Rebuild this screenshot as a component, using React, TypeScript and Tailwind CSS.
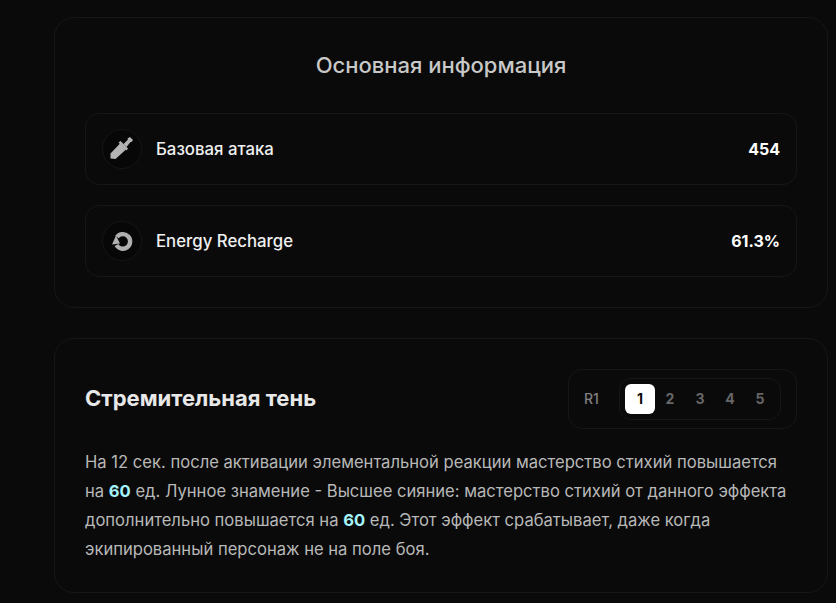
const levels = [1, 2, 3, 4, 5];

function SwordIcon() {
  return (
    <svg width="24" height="24" viewBox="0 0 24 24" className="text-[#b4b4b4]" fill="currentColor">
      <path d="M0.5 16.5 L0.5 21.5 L5.5 22 L16 12.5 L10 6.5 Z" />
      <path d="M8.5 5.5 L10.5 4 L18 11.5 L16.5 13.5 Z" />
      <path d="M13.5 7 L18 2.5 L17.5 1.5 L20 0 L23 3 L21.5 5 L20.5 5 L16.5 10 Z" />
    </svg>
  );
}

function RechargeIcon() {
  return (
    <svg width="24" height="24" viewBox="0 0 24 24" fill="none">
      <path d="M7 8 A7.3 7.3 0 1 1 6.5 16" stroke="#b0b0b0" strokeWidth="4.4" />
      <path d="M2 15.5 L6 6.5 L10 14.5 Z" fill="#b0b0b0" />
    </svg>
  );
}

function StatRow({ icon, label, value }: { icon: React.ReactNode; label: string; value: string }) {
  return (
    <div className="flex h-[72px] items-center justify-between rounded-[14px] border border-[#161616] px-4">
      <div className="flex items-center gap-3.5">
        <div className="flex h-10 w-10 items-center justify-center rounded-full border border-[#161616] bg-[#070707]">
          {icon}
        </div>
        <span className="text-[16.8px] leading-[25px] font-medium text-[#f0f0f0]">{label}</span>
      </div>
      <span className="text-base font-bold text-white">{value}</span>
    </div>
  );
}

export default function App() {
  return (
    <div
      className="flex h-[603px] flex-col gap-[30px] overflow-hidden bg-[#0a0a0a] pl-[54px] pr-2 pt-[17px]"
      style={{ fontFamily: '"Inter", "Liberation Sans", sans-serif' }}
    >
      {/* Main info */}
      <section className="flex flex-col rounded-[20px] border border-[#161616] px-[30px] pb-[30px] pt-[30px]">
        <h2 className="mb-[30px] text-center text-[22px] leading-[35px] font-medium text-[#c8c8c8]">
          Основная информация
        </h2>
        <div className="flex flex-col gap-5">
          <StatRow icon={<SwordIcon />} label="Базовая атака" value="454" />
          <StatRow icon={<RechargeIcon />} label="Energy Recharge" value="61.3%" />
        </div>
      </section>

      {/* Passive */}
      <section className="flex h-[255px] flex-col rounded-[20px] border border-[#161616] px-[30px] pt-[30px]">
        <div className="flex items-center justify-between">
          <h3 className="-mt-0.5 text-[22px] font-bold text-[#e8e8e8]">Стремительная тень</h3>
          <div className="flex h-[60px] w-[229px] items-center justify-between rounded-[14px] border border-[#161616] pl-[15px] pr-[15px]">
            <span className="text-sm font-medium text-[#808080]">R1</span>
            <div className="flex h-[42px] w-[162px] items-center gap-0 rounded-xl border border-[#161616] px-[5px]">
              {levels.map((n) => (
                <span
                  key={n}
                  className={
                    n === 1
                      ? "flex h-[30px] w-[30px] items-center justify-center rounded-md bg-white text-sm font-bold text-[#0a0a0a]"
                      : "flex h-[30px] w-[30px] items-center justify-center text-sm font-bold text-[#666666]"
                  }
                >
                  {n}
                </span>
              ))}
            </div>
          </div>
        </div>
        <p className="mt-[19px] text-[16.6px] leading-[29px] text-[#b8b8b8]">
          На 12 сек. после активации элементальной реакции мастерство стихий повышается на{" "}
          <span className="font-bold text-[#a5f3fc]">60</span> ед. Лунное знамение - Высшее сияние: мастерство стихий от
          данного эффекта дополнительно повышается на <span className="font-bold text-[#a5f3fc]">60</span> ед. Этот эффект
          срабатывает, даже когда экипированный персонаж не на поле боя.
        </p>
      </section>
    </div>
  );
}
